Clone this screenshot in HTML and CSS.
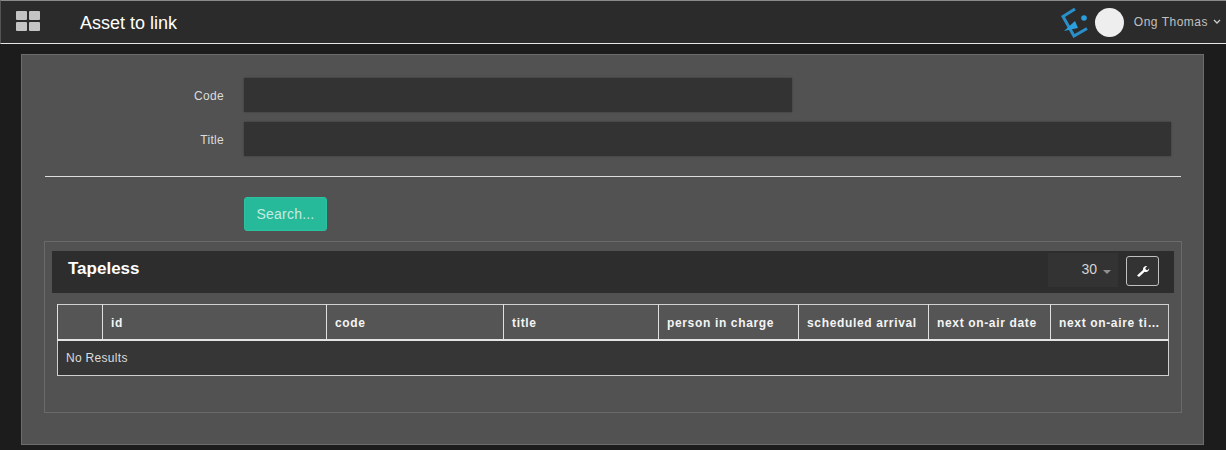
FILE: index.html
```html
<!DOCTYPE html>
<html lang="en">
<head>
  <meta charset="UTF-8" />
  <title>Asset to link</title>
  <link rel="stylesheet" href="styles.css">
</head>
<body>
  <header class="navbar">
    <div class="nav_grid"><span></span><span></span><span></span><span></span></div>
    <div class="nav_title">Asset to link</div>
    <div class="nav_user">
      <svg class="nav_logo" width="28" height="30" viewBox="0 0 28 30">
        <path d="M14 1 L2 8.5 L13 28 L26 20.5" fill="none" stroke="#2a8fc9" stroke-width="3"/>
        <path d="M3 23 L14 13 L17 20 Z" fill="#2a9fdc"/>
        <circle cx="23" cy="10" r="2.8" fill="#2a9fdc"/>
      </svg>
      <div class="avatar"></div>
      <span class="user_name">Ong Thomas</span>
      <svg class="chevron" width="8" height="6" viewBox="0 0 8 6"><path d="M1 1 L4 4 L7 1" fill="none" stroke="#ccc" stroke-width="1.3"/></svg>
    </div>
  </header>

  <main class="panel">
    <div class="form_row">
      <label class="form_label">Code</label>
      <input class="form_input input_code" type="text">
    </div>
    <div class="form_row">
      <label class="form_label">Title</label>
      <input class="form_input input_title" type="text">
    </div>
    <hr class="divider">
    <button class="btn_search">Search...</button>

    <section class="tapeless">
      <div class="tapeless_head">
        <h3>Tapeless</h3>
        <div class="page_size">30 <span class="caret"></span></div>
        <button class="btn_tool">
          <svg width="14" height="14" viewBox="0 0 14 14"><path d="M1 11.5 L7 6 C6.6 3.8 8.4 1.6 11.2 2 L9.2 4.2 L10 5.8 L11.6 6.2 L13.2 4.2 C13.4 7 11 8.6 8.6 7.8 L3 13 Z" fill="#fff"/></svg>
        </button>
      </div>
      <table class="grid">
        <colgroup>
          <col class="c0"><col class="c1"><col class="c2"><col class="c3"><col class="c4"><col class="c5"><col class="c6"><col class="c7">
        </colgroup>
        <thead>
          <tr>
            <th></th>
            <th>id</th>
            <th>code</th>
            <th>title</th>
            <th>person in charge</th>
            <th>scheduled arrival</th>
            <th>next on-air date</th>
            <th>next on-aire time</th>
          </tr>
        </thead>
        <tbody>
          <tr><td colspan="8">No Results</td></tr>
        </tbody>
      </table>
    </section>
  </main>
</body>
</html>
```

FILE: styles.css
```css
html, body {
  height: 100%;
}
body {
  margin: 0;
  height: 450px;
  overflow: hidden;
  background: #1c1c1c;
  font-family: "Liberation Sans", Arial, sans-serif;
  color: #fff;
}

.navbar {
  display: flex;
  align-items: center;
  height: 42px;
  background: #2b2b2b;
  border-top: 1px solid #8a8a8a;
  border-bottom: 1px solid #e6e6e6;
  border-left: 1px solid #555;
  padding-right: 5px;
}
.nav_grid {
  display: grid;
  grid-template-columns: 11px 11px;
  grid-template-rows: 9px 9px;
  gap: 2px;
  margin-left: 15px;
  margin-top: -2px;
}
.nav_grid span {
  background: #c4c4c4;
  border-radius: 1px;
}
.nav_title {
  margin-left: 40px;
  margin-top: 2px;
  font-size: 18px;
  color: #fff;
}
.nav_user {
  display: flex;
  align-items: center;
  margin-left: auto;
}
.nav_logo {
  margin-right: 6px;
  margin-top: 1px;
}
.avatar {
  width: 29px;
  height: 29px;
  border-radius: 50%;
  background: #eeeeee;
}
.user_name {
  margin-left: 10px;
  font-size: 12px;
  letter-spacing: 0.5px;
  color: #c0c0c0;
}
.chevron {
  margin-left: 5px;
}

.panel {
  width: 1183px;
  height: 391px;
  box-sizing: border-box;
  margin: 10px 0 0 21px;
  padding: 23px 22px 0 23px;
  background: #525252;
  border: 1px solid #6c6c6c;
}

.form_row {
  display: flex;
  align-items: center;
  height: 34px;
  margin-bottom: 10px;
}
.form_label {
  width: 179px;
  padding-top: 2px;
  text-align: right;
  font-size: 12px;
  letter-spacing: 0.3px;
  color: #dcdcdc;
}
.form_input {
  margin-left: 20px;
  height: 34px;
  box-sizing: border-box;
  background: #333333;
  border: none;
  box-shadow: 0 0 2px #3a3a3a;
}
.input_code {
  width: 548px;
}
.input_title {
  width: 927px;
}

.divider {
  margin: 20px 0 20px 0;
  height: 1px;
  border: none;
  background: #dddddd;
  width: 1136px;
}

.btn_search {
  display: block;
  margin-left: 199px;
  width: 83px;
  height: 34px;
  background: #26b99a;
  border: 1px solid #2ac3a2;
  border-radius: 3px;
  color: #c4ece2;
  font-family: inherit;
  font-size: 14px;
  letter-spacing: 0.2px;
}

.tapeless {
  width: 1138px;
  height: 172px;
  box-sizing: border-box;
  margin: 10px 0 0 -1px;
  padding: 9px 7px 0 7px;
  border: 1px solid #6a6a6a;
}
.tapeless_head {
  display: flex;
  align-items: center;
  height: 42px;
  background: #2d2d2d;
}
.tapeless_head h3 {
  margin: -6px 0 0 16px;
  font-size: 17px;
  font-weight: bold;
  color: #fff;
}
.page_size {
  display: flex;
  align-items: center;
  justify-content: flex-end;
  margin-left: auto;
  width: 70px;
  height: 34px;
  box-sizing: border-box;
  margin-top: -5px;
  padding-right: 7px;
  padding-bottom: 2px;
  background: #333333;
  font-size: 14px;
  color: #d4d4d4;
}
.caret {
  margin-left: 6px;
  margin-top: 6px;
  border-top: 4px solid #8f8f8f;
  border-left: 4px solid transparent;
  border-right: 4px solid transparent;
}
.btn_tool {
  display: flex;
  align-items: center;
  justify-content: center;
  width: 33px;
  height: 30px;
  margin: -3px 15px 0 8px;
  padding: 0;
  background: #333333;
  border: 1px solid #c0c0c0;
  border-radius: 3px;
}

.grid {
  width: 1111px;
  margin: 11px 0 0 5px;
  table-layout: fixed;
  border-collapse: collapse;
  font-size: 12px;
  border: 1px solid #d0d0d0;
}
.c0 { width: 45px; }
.c1 { width: 224px; }
.c2 { width: 177px; }
.c3 { width: 155px; }
.c4 { width: 140px; }
.c5 { width: 130px; }
.c6 { width: 122px; }
.c7 { width: 118px; }
.grid th {
  padding: 2px 8px 0;
  box-sizing: border-box;
  height: 35px;
  text-align: left;
  font-weight: bold;
  letter-spacing: 0.65px;
  color: #f4f4f4;
  background: #555555;
  border-left: 1px solid #e0e0e0;
  border-bottom: 2px solid #e4e4e4;
  white-space: nowrap;
  overflow: hidden;
  text-overflow: ellipsis;
}
.grid th:last-child {
  padding-right: 5px;
}
.grid td {
  height: 36px;
  padding: 0 8px;
  box-sizing: border-box;
  background: #363636;
  color: #dcdcdc;
  letter-spacing: 0.3px;
}
```
